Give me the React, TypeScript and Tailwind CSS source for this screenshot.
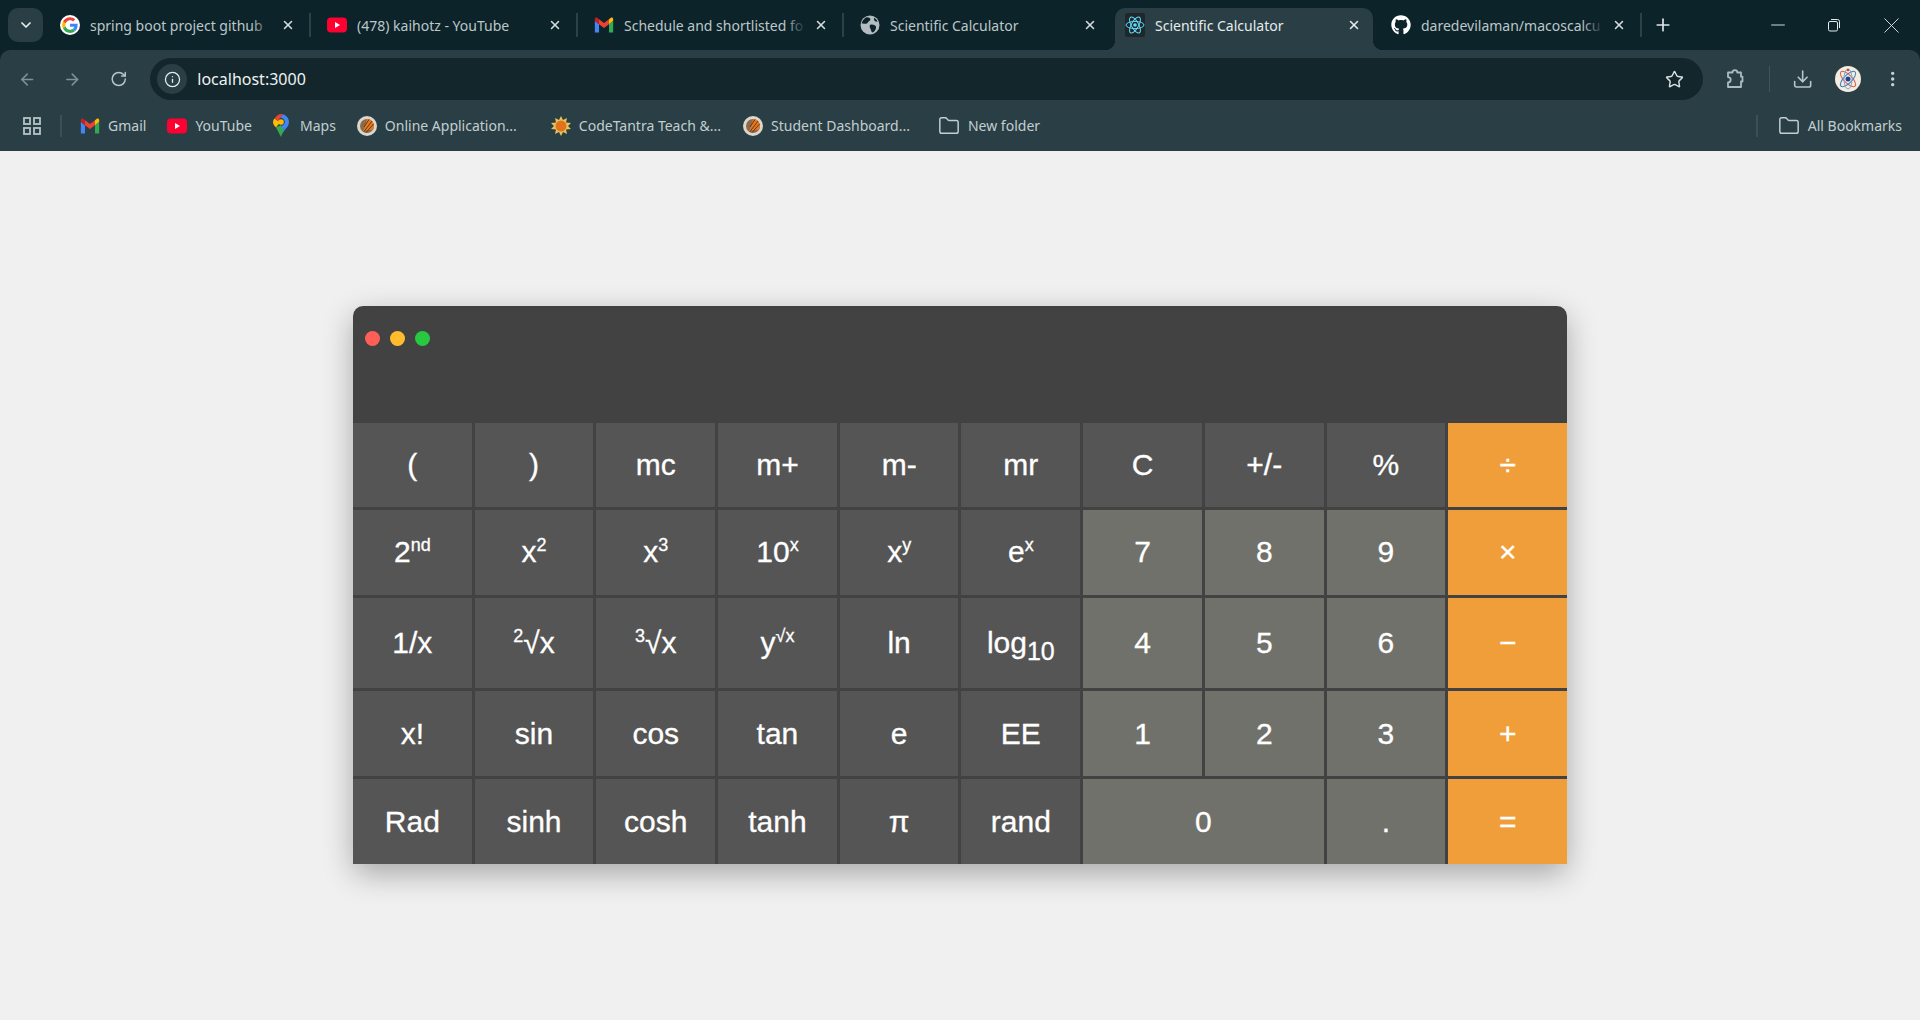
import React from "react";
import { ArrowLeft, ArrowRight, RotateCw, Info, Star, Download, MoreVertical, X, Plus, ChevronDown, Folder, Minus } from "lucide-react";
import { FaGithub } from "react-icons/fa";

const GoogleIcon = () => (
  <svg width="20" height="20" viewBox="0 0 56 56" className="shrink-0">
    <circle cx="28" cy="28" r="28" fill="#fff" />
    <g transform="translate(6 6) scale(0.92)">
      <path fill="#EA4335" d="M24 9.5c3.54 0 6.71 1.22 9.21 3.6l6.85-6.85C35.9 2.38 30.47 0 24 0 14.62 0 6.51 5.38 2.56 13.22l7.98 6.19C12.43 13.72 17.74 9.5 24 9.5z" />
      <path fill="#4285F4" d="M46.98 24.55c0-1.57-.15-3.09-.38-4.55H24v9.02h12.94c-.58 2.96-2.26 5.48-4.78 7.18l7.73 6c4.51-4.18 7.09-10.36 7.09-17.65z" />
      <path fill="#FBBC05" d="M10.53 28.59c-.48-1.45-.76-2.99-.76-4.59s.27-3.14.76-4.59l-7.98-6.19C.92 16.46 0 20.12 0 24c0 3.88.92 7.54 2.56 10.78l7.97-6.19z" />
      <path fill="#34A853" d="M24 48c6.48 0 11.93-2.13 15.89-5.81l-7.73-6c-2.15 1.45-4.92 2.3-8.16 2.3-6.26 0-11.57-4.22-13.47-9.91l-7.98 6.19C6.51 42.62 14.62 48 24 48z" />
    </g>
  </svg>
);

const YouTubeIcon = () => (
  <svg width="20" height="20" viewBox="0 0 20 20" className="shrink-0">
    <rect x="0" y="2.5" width="20" height="15" rx="4" fill="#ff0033" />
    <path d="M8 7l5 3-5 3z" fill="#fff" />
  </svg>
);

const GmailIcon = () => (
  <svg width="20" height="20" viewBox="0 0 24 24" className="shrink-0">
    <path fill="#4285F4" d="M1 21h5V11L1 7z" />
    <path fill="#34A853" d="M18 21h5V7l-5 4z" />
    <path fill="#EA4335" d="M6 11l6 4.6 6-4.6V5l-6 4.6L6 5z" />
    <path fill="#C5221F" d="M1 7l5 4V5L3.8 3.4C2.4 2.4 1 3.4 1 5z" />
    <path fill="#FBBC04" d="M18 5v6l5-4V5c0-1.6-1.4-2.6-2.8-1.6z" />
  </svg>
);

const GlobeIcon = () => (
  <svg width="20" height="20" viewBox="0 0 20 20" className="shrink-0">
    <circle cx="10" cy="10" r="9.5" fill="#b3bcc0" />
    <path fill="#0c2329" d="M6 2.5C8 2 10 3 10.5 4.5 10 6.5 8 6 7.5 8 6.5 9.5 4 8 1.8 8.5 2 6 3.5 4 6 2.5zM10 10c2-1 5 0 6 1.5.5 2-1 4.5-3 6-1 .3-1.8-1-2-2.5-.2-1.500-2-2.500-1-5zM14 2.800c1.500.7 2.800 2 3.500 3.700-1 .5-2.500 0-3.500-1.500z" />
  </svg>
);

const ReactIcon = () => (
  <svg width="20" height="24" viewBox="0 0 20 24" className="shrink-0">
    <rect width="20" height="24" rx="2" fill="#20272a" />
    <g fill="none" stroke="#61dafb" strokeWidth="1">
      <ellipse cx="10" cy="12" rx="9" ry="3.600" />
      <ellipse cx="10" cy="12" rx="9" ry="3.600" transform="rotate(60 10 12)" />
      <ellipse cx="10" cy="12" rx="9" ry="3.600" transform="rotate(120 10 12)" />
    </g>
    <circle cx="10" cy="12" r="1.800" fill="#61dafb" />
  </svg>
);

const MapsIcon = () => (
  <svg width="16" height="24" viewBox="0 0 16 24" className="shrink-0">
    <path fill="#34A853" d="M3 13.500 8 23c.6-2.400 2-4.500 3.400-6.500L8 11z" />
    <path fill="#FBBC04" d="M1.500 4.500C.6 5.700 0 6.600 0 8c0 2.300 1.300 3.800 3 5.500l4-5z" />
    <path fill="#4285F4" d="M10 .3 7 4a4 4 0 0 1 4.500 5.500L8 13l3.400 3.500C13.500 14 16 11.500 16 8c0-3.500-2.500-6.600-6-7.700z" />
    <path fill="#EA4335" d="M1.500 4.500 7 8.500A3 3 0 0 1 7 4l3-3.700C6.900-.700 3.500 1.500 1.500 4.500z" />
    <circle cx="8" cy="8" r="2.800" fill="#FBBC04" />
  </svg>
);

const LpuIcon = () => (
  <svg width="20" height="20" viewBox="0 0 20 20" className="shrink-0">
    <circle cx="10" cy="10" r="10" fill="#dcd6cc" />
    <circle cx="10" cy="10" r="7" fill="#8a6a4c" />
    <path fill="#e9791e" d="M10 3a7 7 0 0 1 6 10.500L6 15C8 11 9 7 10 3z" />
    <path d="M7 15.500 15 5M9 16.500 16.500 8M7 11 12 3.500" stroke="#5d3a1a" strokeWidth="1" fill="none" />
  </svg>
);

const SunIcon = () => (
  <svg width="20" height="20" viewBox="0 0 20 20" className="shrink-0">
    <path fill="#e8c25a" d="M10 0l2 4 4-2-1 4.500 5 .5-3 3 3 3-5 .5 1 4.500-4-2-2 4-2-4-4 2 1-4.500L0 13l3-3-3-3 5-.5L4 2l4 2z" />
    <circle cx="10" cy="10" r="5.500" fill="#e2731c" />
  </svg>
);

const Avatar = () => (
  <svg width="26" height="26" viewBox="0 0 26 26">
    <circle cx="13" cy="13" r="13" fill="#f2ede0" />
    <g fill="none" strokeWidth="1">
      <ellipse cx="13" cy="13" rx="10" ry="4" stroke="#d9614c" transform="rotate(45 13 13)" />
      <ellipse cx="13" cy="13" rx="10" ry="4" stroke="#4a7ab8" transform="rotate(-45 13 13)" />
      <ellipse cx="13" cy="13" rx="10" ry="4" stroke="#7aa6d0" transform="rotate(90 13 13)" />
    </g>
    <circle cx="13" cy="13" r="2.500" fill="#23409a" />
    <circle cx="13" cy="4" r="1.300" fill="#d9432f" />
  </svg>
);

const RestoreIcon = () => (
  <svg width="16" height="16" viewBox="0 0 16 16" fill="none" stroke="#e4e9ea" strokeWidth="1">
    <rect x="2.500" y="4.500" width="9" height="9.500" rx="1.500" />
    <path d="M5 2.500h6.500a2 2 0 0 1 2 2V11" />
  </svg>
);

const PuzzleIcon = () => (
  <svg width="22" height="22" viewBox="0 0 22 22" fill="none" stroke="#a9bcc0" strokeWidth="1.800" strokeLinejoin="round">
    <path d="M4 4.500h4.500a2.400 2.400 0 0 1 4.800 0H17v4.200h1.500v4.800H17V19H4v-4.500a2.700 2.700 0 0 0 0-5.400z" />
  </svg>
);

const AppsIcon = () => (
  <svg width="18" height="18" viewBox="0 0 18 18" fill="none" stroke="#b7c4c6" strokeWidth="1.800">
    <rect x="1" y="1" width="6" height="6" />
    <rect x="11" y="1" width="6" height="6" />
    <rect x="1" y="11" width="6" height="6" />
    <rect x="11" y="11" width="6" height="6" />
  </svg>
);

type TabInfo = { icon: React.ReactNode; title: string; wide: number; fade?: boolean; active?: boolean; sep?: boolean };

const tabs: TabInfo[] = [
  { icon: <GoogleIcon />, title: "spring boot project github", wide: 267, fade: true, sep: true },
  { icon: <YouTubeIcon />, title: "(478) kaihotz - YouTube", wide: 267, sep: true },
  { icon: <GmailIcon />, title: "Schedule and shortlisted fo", wide: 266, fade: true, sep: true },
  { icon: <GlobeIcon />, title: "Scientific Calculator", wide: 269 },
  { icon: <ReactIcon />, title: "Scientific Calculator", wide: 258, active: true },
  { icon: <FaGithub className="shrink-0 text-white" size={20} />, title: "daredevilaman/macoscalcu", wide: 267, fade: true, sep: true },
];

function Tab({ t }: { t: TabInfo }) {
  return (
    <div
      className={`relative flex h-[42px] shrink-0 items-center pb-[8px] ${t.active ? "ml-[2px] mr-[2px] rounded-t-[10px] bg-[#293f45] pl-[10px] pr-[12px] text-[#e6ecec]" : "pl-[16px] pr-[16px] text-[#bcc7ca]"}`}
      style={{ width: t.wide }}
    >
      {t.icon}
      <span className="relative ml-[10px] min-w-0 flex-1 overflow-hidden whitespace-nowrap text-[14px]">
        {t.title}
        {t.fade && <span className="absolute inset-y-0 right-0 w-[22px] bg-gradient-to-r from-transparent to-[#0c2329]" />}
      </span>
      <X size={14} strokeWidth={2.6} className={`ml-[8px] shrink-0 ${t.active ? "text-[#e6ecec]" : "text-[#d5dcde]"}`} />
      {t.sep && <span className="absolute right-0 top-[5px] h-[24px] w-[2px] bg-[#2c4248]" />}
      {t.active && (
        <>
          <span className="absolute -left-[10px] bottom-0 h-[10px] w-[10px] bg-[radial-gradient(circle_at_0_0,transparent_10px,#293f45_10.5px)]" />
          <span className="absolute -right-[10px] bottom-0 h-[10px] w-[10px] bg-[radial-gradient(circle_at_100%_0,transparent_10px,#293f45_10.5px)]" />
        </>
      )}
    </div>
  );
}

function Bookmark({ icon, label, className, gap = "gap-[8px]" }: { icon: React.ReactNode; label: string; className: string; gap?: string }) {
  return (
    <div className={`flex items-center whitespace-nowrap ${gap} ${className}`}>
      {icon}
      <span>{label}</span>
    </div>
  );
}

const FolderIcon = () => <Folder size={22} strokeWidth={1.6} className="shrink-0 text-[#c3ced0]" />;

function Key({ children, kind = "fn", wide }: { children: React.ReactNode; kind?: "fn" | "num" | "op"; wide?: boolean }) {
  const color = kind === "fn" ? "bg-[#555555]" : kind === "num" ? "bg-[#71716b]" : "bg-[#f09e3a]";
  return (
    <button className={`${color} ${wide ? "col-span-2" : ""} text-center text-[30px] leading-none text-white [-webkit-text-stroke:0.3px_white]`}>
      {children}
    </button>
  );
}

const Sup = ({ children }: { children: React.ReactNode }) => <sup className="top-[-11px] text-[18px]">{children}</sup>;

export default function App() {
  return (
    <div className="flex min-h-screen flex-col bg-[#f0f0f0] font-['Liberation_Sans',Arial,sans-serif]">
      <header className="bg-[#0c2329] font-['Noto_Sans',sans-serif]">
        <div className="flex h-[50px] items-end pl-[8px]">
          <div className="mb-[8px] mr-[1px] flex h-[34px] w-[35px] items-center justify-center rounded-[10px] bg-[#293f45] text-[#e6ecec]">
            <ChevronDown size={16} strokeWidth={2.6} />
          </div>
          {tabs.map((t, i) => (
            <Tab key={i} t={t} />
          ))}
          <div className="mb-[8px] ml-[8px] flex h-[34px] w-[26px] items-center justify-center text-[#dfe6e7]">
            <Plus size={20} strokeWidth={2} />
          </div>
          <div className="ml-auto mb-[10px] flex h-[30px] items-center pr-[15px] text-[#e4e9ea]">
            <Minus size={22} strokeWidth={1} />
            <span className="ml-[37px]">
              <RestoreIcon />
            </span>
            <X size={27} strokeWidth={0.8} className="ml-[36px]" />
          </div>
        </div>
        <div className="rounded-t-[10px] bg-[#293f45]">
          <div className="flex h-[58px] items-center pl-[18px] pr-[18px]">
            <ArrowLeft size={19} strokeWidth={2} className="text-[#7f9296]" />
            <ArrowRight size={19} strokeWidth={2} className="ml-[27px] text-[#7f9296]" />
            <RotateCw size={18} strokeWidth={2} className="ml-[28px] text-[#b7c6c9]" />
            <div className="ml-[23px] flex h-[42px] w-[1553px] shrink-0 items-center rounded-full bg-[#12262c] pl-[7px] pr-[19px]">
              <div className="flex h-[30px] w-[30px] items-center justify-center rounded-full bg-[#293f45] text-[#e6ecec]">
                <Info size={17} strokeWidth={1.8} />
              </div>
              <span className="ml-[10px] text-[16px] text-[#eef2f2]">localhost:3000</span>
              <Star size={19} strokeWidth={1.8} className="ml-auto text-[#d8e0e2]" />
            </div>
            <div className="ml-[21px]">
              <PuzzleIcon />
            </div>
            <span className="ml-[23px] h-[26px] w-px bg-[#3f555b]" />
            <Download size={22} strokeWidth={1.8} className="ml-[22px] text-[#b7c6c9]" />
            <div className="ml-[21px]">
              <Avatar />
            </div>
            <MoreVertical size={20} strokeWidth={2.2} className="ml-[22px] text-[#c8d2d4]" />
          </div>
          <div className="flex h-[43px] items-center pb-[8px] text-[14px] text-[#c3ced0]">
            <div className="ml-[23px]">
              <AppsIcon />
            </div>
            <span className="ml-[19px] h-[22px] w-[2px] bg-[#3a5056]" />
            <Bookmark icon={<GmailIcon />} label="Gmail" className="ml-[18px]" />
            <Bookmark icon={<YouTubeIcon />} label="YouTube" className="ml-[21px]" />
            <Bookmark icon={<MapsIcon />} label="Maps" className="ml-[21px]" gap="gap-[11px]" />
            <Bookmark icon={<LpuIcon />} label="Online Application..." className="ml-[21px]" />
            <Bookmark icon={<SunIcon />} label="CodeTantra Teach &..." className="ml-[34px]" />
            <Bookmark icon={<LpuIcon />} label="Student Dashboard..." className="ml-[22px]" />
            <Bookmark icon={<FolderIcon />} label="New folder" className="ml-[28px]" />
            <span className="ml-auto h-[22px] w-[2px] bg-[#3a5056]" />
            <Bookmark icon={<FolderIcon />} label="All Bookmarks" className="ml-[20px] mr-[18px]" />
          </div>
        </div>
      </header>

      <main className="flex flex-1 items-center justify-center pb-[1px]">
        <div className="w-[1214px] rounded-[10px] bg-[#424242] shadow-[0_10px_30px_rgba(0,0,0,0.3)]">
          <div className="h-[117px] pl-[12px] pt-[25px]">
            <div className="flex gap-[10px]">
              <span className="h-[15px] w-[15px] rounded-full bg-[#ff5f57]" />
              <span className="h-[15px] w-[15px] rounded-full bg-[#ffbd2e]" />
              <span className="h-[15px] w-[15px] rounded-full bg-[#28c940]" />
            </div>
          </div>
          <div className="grid grid-cols-10 grid-rows-[84.6px_84.6px_90.6px_84.6px_85.6px] gap-[3px]">
            <Key>(</Key>
            <Key>)</Key>
            <Key>mc</Key>
            <Key>m+</Key>
            <Key>m-</Key>
            <Key>mr</Key>
            <Key>C</Key>
            <Key>+/-</Key>
            <Key>%</Key>
            <Key kind="op">÷</Key>

            <Key>2<Sup>nd</Sup></Key>
            <Key>x<Sup>2</Sup></Key>
            <Key>x<Sup>3</Sup></Key>
            <Key>10<Sup>x</Sup></Key>
            <Key>x<Sup>y</Sup></Key>
            <Key>e<Sup>x</Sup></Key>
            <Key kind="num">7</Key>
            <Key kind="num">8</Key>
            <Key kind="num">9</Key>
            <Key kind="op">×</Key>

            <Key>1/x</Key>
            <Key><Sup>2</Sup>√x</Key>
            <Key><Sup>3</Sup>√x</Key>
            <Key>y<Sup>√x</Sup></Key>
            <Key>ln</Key>
            <Key>log<sub className="bottom-[-7px] text-[25px]">10</sub></Key>
            <Key kind="num">4</Key>
            <Key kind="num">5</Key>
            <Key kind="num">6</Key>
            <Key kind="op">−</Key>

            <Key>x!</Key>
            <Key>sin</Key>
            <Key>cos</Key>
            <Key>tan</Key>
            <Key>e</Key>
            <Key>EE</Key>
            <Key kind="num">1</Key>
            <Key kind="num">2</Key>
            <Key kind="num">3</Key>
            <Key kind="op">+</Key>

            <Key>Rad</Key>
            <Key>sinh</Key>
            <Key>cosh</Key>
            <Key>tanh</Key>
            <Key>π</Key>
            <Key>rand</Key>
            <Key kind="num" wide>0</Key>
            <Key kind="num">.</Key>
            <Key kind="op">=</Key>
          </div>
        </div>
      </main>
    </div>
  );
}
